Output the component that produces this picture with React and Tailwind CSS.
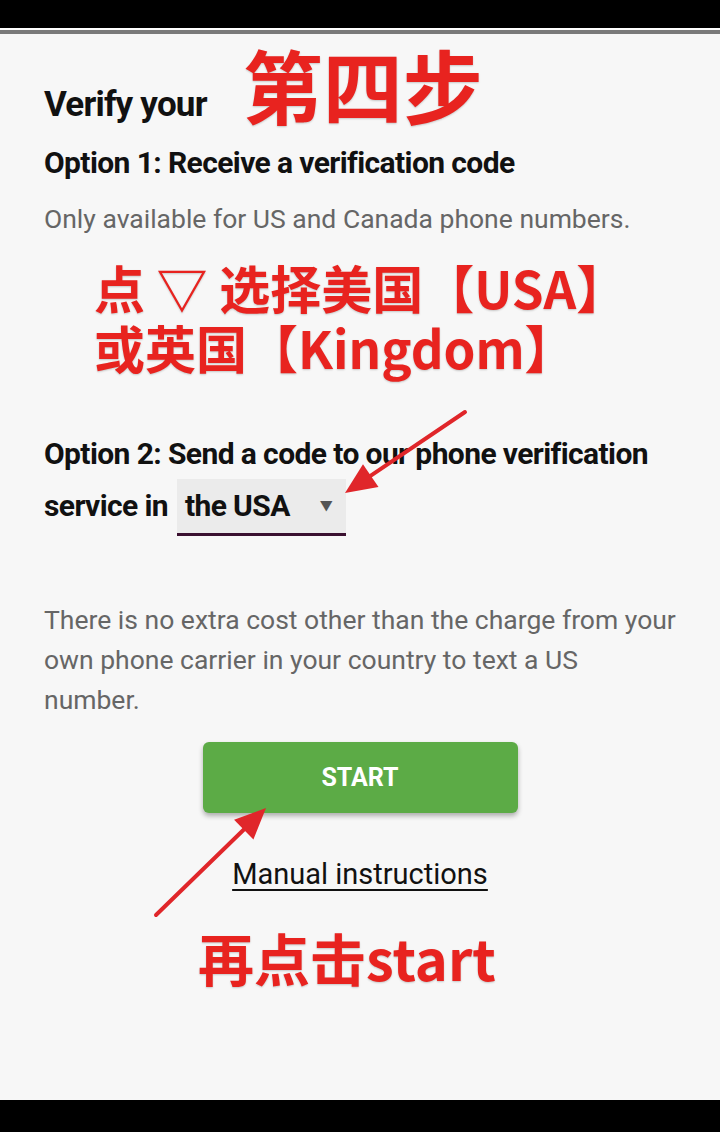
import React from 'react'

const Arrow = ({ x1, y1, x2, y2 }) => {
  const ang = Math.atan2(y2 - y1, x2 - x1)
  const len = 34
  const spread = 0.42
  const ax = x2 - len * Math.cos(ang - spread)
  const ay = y2 - len * Math.sin(ang - spread)
  const bx = x2 - len * Math.cos(ang + spread)
  const by = y2 - len * Math.sin(ang + spread)
  const sx = x2 - 24 * Math.cos(ang)
  const sy = y2 - 24 * Math.sin(ang)
  return (
    <g>
      <line x1={x1} y1={y1} x2={sx} y2={sy} stroke="#e0262a" strokeWidth="4" strokeLinecap="round" />
      <polygon points={`${x2},${y2} ${ax},${ay} ${bx},${by}`} fill="#e0262a" />
    </g>
  )
}

const cjk = { fontFamily: '"Noto Sans CJK SC", sans-serif' }

const App = () => {
  return (
    <div className="relative w-[720px] h-[1132px] bg-[#f7f7f7] overflow-hidden" style={{ fontFamily: 'Roboto, "Noto Sans CJK SC", sans-serif' }}>
      <div className="h-[28px] bg-black"></div>
      <div className="h-[2px] bg-white"></div>
      <div className="h-[4px] bg-[#7a7a7a]"></div>

      <div className="pl-[44px]">
        <div className="flex items-end gap-[36px] h-[96px]">
          <h1 className="text-[35px] font-bold text-[#111] tracking-[-0.8px] leading-none pb-[8px]">Verify your</h1>
          <span className="text-[80px] font-bold text-[#e8231f] leading-none pb-[7px] [text-shadow:0_1px_2px_rgba(0,0,0,0.2)]" style={cjk}>第四步</span>
        </div>

        <h2 className="mt-[15px] text-[30px] font-bold text-[#111] tracking-[-0.6px] leading-[36px]">Option 1: Receive a verification code</h2>
        <p className="mt-[22px] text-[26.5px] text-[#666] leading-[32px]">Only available for US and Canada phone numbers.</p>

        <div className="mt-[22px] pl-[50px] text-[51px] font-bold text-[#e8231f] leading-[60px] [text-shadow:0_1px_2px_rgba(0,0,0,0.2)]" style={cjk}>
          <div className="h-[60px]">点 ▽ 选择美国【USA】</div>
          <div className="h-[60px]">或英国【Kingdom】</div>
        </div>

        <h2 className="mt-[52px] text-[30px] font-bold text-[#111] tracking-[-0.6px] leading-[50px]">
          Option 2: Send a code to our phone verification
          <br />
          service in{' '}
          <span className="inline-flex items-center gap-[30px] ml-[2px] pl-[8px] pr-[14px] bg-[#ebebeb] border-b-[3px] border-[#3a1030] leading-[54px]">
            the USA
            <span className="text-[13px] text-[#555]">▼</span>
          </span>
        </h2>

        <p className="mt-[64px] text-[26.5px] text-[#666] leading-[40px]">
          There is no extra cost other than the charge from your
          <br />
          own phone carrier in your country to text a US
          <br />
          number.
        </p>

        <div className="flex flex-col items-center -ml-[44px]">
          <button className="mt-[22px] w-[315px] h-[71px] rounded-[6px] bg-[#5cab46] text-white text-[25px] font-bold shadow-[0_3px_5px_rgba(0,0,0,0.3)]">START</button>
          <a className="mt-[40px] text-[29px] text-[#111] underline underline-offset-[5px] decoration-[2px]">Manual instructions</a>
          <div className="mt-[32px] text-[56px] font-bold text-[#e8231f] leading-none pr-[26px] [text-shadow:0_1px_2px_rgba(0,0,0,0.2)]" style={cjk}>再点击start</div>
        </div>
      </div>

      <div className="absolute left-0 right-0 bottom-0 h-[32px] bg-black"></div>

      <svg className="absolute inset-0 pointer-events-none" width="720" height="1132">
        <Arrow x1={465} y1={412} x2={345} y2={493} />
        <Arrow x1={156} y1={915} x2={266} y2={808} />
      </svg>
    </div>
  )
}

export default App
